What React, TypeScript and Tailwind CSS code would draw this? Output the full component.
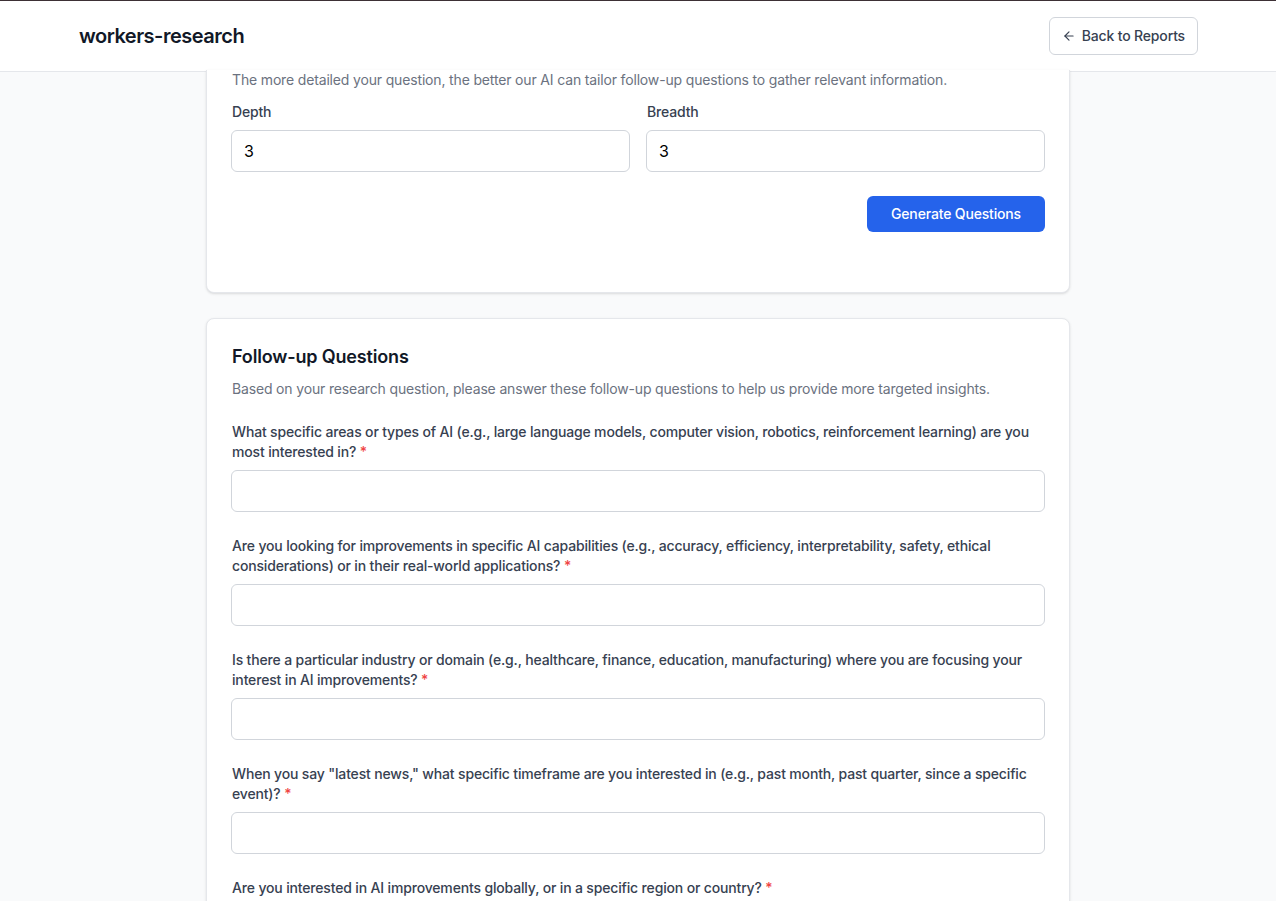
import { ArrowLeft } from "lucide-react";

const questions = [
  "What specific areas or types of AI (e.g., large language models, computer vision, robotics, reinforcement learning) are you most interested in?",
  "Are you looking for improvements in specific AI capabilities (e.g., accuracy, efficiency, interpretability, safety, ethical considerations) or in their real-world applications?",
  "Is there a particular industry or domain (e.g., healthcare, finance, education, manufacturing) where you are focusing your interest in AI improvements?",
  'When you say "latest news," what specific timeframe are you interested in (e.g., past month, past quarter, since a specific event)?',
  "Are you interested in AI improvements globally, or in a specific region or country?",
];

const App = () => {
  return (
    <div className="h-[901px] overflow-hidden bg-[#f9fafb] font-['Inter','Liberation_Sans',sans-serif] tracking-[-0.01em] text-[#111827]">
      <div className="h-px bg-[#3d3035]" />
      {/* header */}
      <header className="h-[71px] bg-white border-b border-[#e5e7eb] flex items-center justify-between pl-20 pr-[78px]">
        <h1 className="text-xl font-semibold tracking-tight text-[#111827] -ml-px">workers-research</h1>
        <button className="flex items-center gap-1.5 border border-[#d1d5db] rounded-md h-[38px] px-3 text-sm font-medium text-[#374151] bg-white">
          <ArrowLeft size={14} strokeWidth={2} />
          Back to Reports
        </button>
      </header>

      <main className="max-w-4xl mx-auto px-4">
        {/* research form (scrolled) */}
        <div className="bg-white border border-[#e5e7eb] border-t-0 rounded-b-lg shadow-sm px-6 pb-[60px]">
          <p className="text-sm leading-5 text-[#6b7280] -mt-0.5 pl-px">
            The more detailed your question, the better our AI can tailor follow-up questions to gather relevant information.
          </p>
          <div className="grid grid-cols-2 gap-4 mt-3">
            <div>
              <label className="block text-sm font-medium text-[#374151] mb-2 pl-px">Depth</label>
              <input
                defaultValue="3"
                className="w-full h-[42px] border border-[#d1d5db] rounded-md px-3 text-base text-black outline-none"
              />
            </div>
            <div>
              <label className="block text-sm font-medium text-[#374151] mb-2 pl-px">Breadth</label>
              <input
                defaultValue="3"
                className="w-full h-[42px] border border-[#d1d5db] rounded-md px-3 text-base text-black outline-none"
              />
            </div>
          </div>
          <div className="flex justify-end mt-6">
            <button className="bg-[#2563eb] text-white text-sm font-medium rounded-md h-9 px-6">
              Generate Questions
            </button>
          </div>
        </div>

        {/* follow-up questions */}
        <div className="bg-white border border-[#e5e7eb] rounded-lg shadow-sm p-6 mt-[25px]">
          <h2 className="text-lg font-semibold text-[#111827] pl-px">Follow-up Questions</h2>
          <p className="text-sm text-[#6b7280] mt-2 pl-px">
            Based on your research question, please answer these follow-up questions to help us provide more targeted insights.
          </p>
          <div className="flex flex-col gap-6 mt-[23px]">
            {questions.map((q) => (
              <div key={q}>
                <label className="block text-sm font-medium text-[#374151] mb-2 pl-px">
                  {q} <span className="text-[#ef4444]">*</span>
                </label>
                <input className="w-full h-[42px] border border-[#d1d5db] rounded-md px-3 text-base outline-none" />
              </div>
            ))}
          </div>
        </div>
      </main>
    </div>
  );
};

export default App;
